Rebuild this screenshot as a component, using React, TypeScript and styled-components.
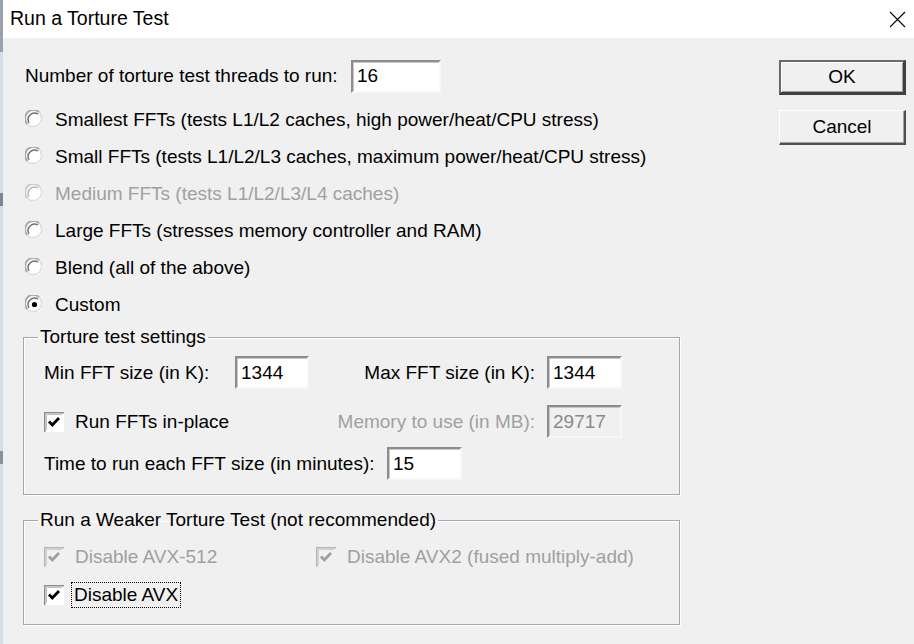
import * as React from 'react';
import styled, { createGlobalStyle } from 'styled-components';

const GlobalStyle = createGlobalStyle`
    html, body {
        margin: 0;
        padding: 0;
        background: #f0f0f0;
    }
    body {
        font-family: "Liberation Sans", Arial, sans-serif;
    }
`;

const Window = styled.div`
    display: flex;
    width: 914px;
    height: 644px;
    overflow: hidden;
    background: #f0f0f0;
    color: #000;
    font-size: 19px;
`;

const Edge = styled.div`
    width: 3px;
    background: linear-gradient(#9aa3ad 0 8%, #d5dde6 8% 30%, #7d8690 30% 32%, #d5dde6 32% 70%, #8a939c 70% 72%, #d5dde6 72%);
`;

const Dialog = styled.div`
    flex: 1;
    display: flex;
    flex-direction: column;
`;

const TitleBar = styled.div`
    height: 38px;
    background: #fff;
    display: flex;
    align-items: center;
    justify-content: space-between;
    padding: 0 8px 0 7px;
`;

const Title = styled.div`
    font-size: 19.5px;
    padding-bottom: 2px;
`;

const Body = styled.div`
    display: flex;
    padding: 22px 0 0 20px;
`;

const Main = styled.div`
    width: 657px;
    display: flex;
    flex-direction: column;
`;

const Side = styled.div`
    margin-left: 99px;
    display: flex;
    flex-direction: column;
    gap: 15px;
`;

const Row = styled.div<{ $h?: number; $pad?: number; $top?: number }>`
    display: flex;
    align-items: center;
    height: ${p => p.$h ?? 33}px;
    padding-left: ${p => p.$pad ?? 0}px;
    margin-top: ${p => p.$top ?? 0}px;
`;

const Label = styled.span<{ $w?: number; $off?: boolean; $right?: boolean }>`
    white-space: nowrap;
    color: ${p => (p.$off ? '#a0a0a0' : '#000')};
    ${p => (p.$w ? `width: ${p.$w}px; flex: none;` : '')}
    ${p => (p.$right ? 'text-align: right; padding-right: 12px; box-sizing: border-box;' : '')}
`;

const Field = styled.div<{ $w: number; $off?: boolean }>`
    box-sizing: border-box;
    width: ${p => p.$w}px;
    height: 33px;
    flex: none;
    display: flex;
    align-items: center;
    padding-left: 4px;
    background: ${p => (p.$off ? '#f0f0f0' : '#fff')};
    color: ${p => (p.$off ? '#8a8a8a' : '#000')};
    border-style: solid;
    border-width: 2px;
    border-color: #8c8c8c #f7f7f7 #f7f7f7 #8c8c8c;
    box-shadow: inset 1px 1px 0 #c8c8c8;
`;

const RadioList = styled.div`
    margin-top: 9px;
    display: flex;
    flex-direction: column;
`;

const Option = styled.div<{ $off?: boolean }>`
    display: flex;
    align-items: center;
    gap: 11px;
    height: 37px;
    padding-left: 2px;
    white-space: nowrap;
    color: ${p => (p.$off ? '#a0a0a0' : '#000')};
`;

const Group = styled.fieldset<{ $top: number; $pt: number; $pb: number }>`
    margin: ${p => p.$top}px 0 0 0;
    padding: ${p => p.$pt}px 57px ${p => p.$pb}px 20px;
    border: 1px solid #a8a8a8;
    box-shadow: inset 1px 1px 0 #fff, 1px 1px 0 #fff;
    min-width: 0;
`;

const Legend = styled.legend`
    margin-left: -6px;
    padding: 0 2px;
    line-height: 22px;
`;

const SizeGrid = styled.div`
    display: grid;
    grid-template-columns: 191px 74px 1fr 75px;
    grid-template-rows: 33px 33px;
    row-gap: 16px;
    align-items: center;
`;

const Span2 = styled.div`
    grid-column: span 2;
    display: flex;
    align-items: center;
    gap: 11px;
`;

const CheckRow = styled.div<{ $gap?: number }>`
    display: flex;
    align-items: center;
    height: 30px;
    margin-top: ${p => p.$gap ?? 0}px;
`;

const CheckItem = styled.div<{ $w?: number; $off?: boolean }>`
    display: flex;
    align-items: center;
    gap: 11px;
    flex: none;
    white-space: nowrap;
    ${p => (p.$w ? `width: ${p.$w}px;` : '')}
    color: ${p => (p.$off ? '#a0a0a0' : '#000')};
`;

const Focus = styled.span`
    outline: 1px dotted #000;
    outline-offset: 1px;
    padding: 0 1px;
    margin-left: -2px;
`;

const Button = styled.button<{ $default?: boolean }>`
    width: 127px;
    height: 35px;
    font: inherit;
    font-size: 19px;
    color: #000;
    background: #f0f0f0;
    padding: 0;
    border-style: solid;
    border-width: ${p => (p.$default ? '2px 3px 3px 2px' : '1px 2px 2px 1px')};
    border-color: ${p => (p.$default ? '#6a6a6a #404040 #404040 #6a6a6a' : '#fff #505050 #505050 #fff')};
    box-shadow: ${p => (p.$default ? 'inset 1px 1px 0 #fff, inset -1px -1px 0 #a0a0a0' : 'inset -1px -1px 0 #a0a0a0')};
    cursor: pointer;
`;

const Radio = ({ on, off }: { on?: boolean; off?: boolean }) => (
    <svg width="19" height="19" viewBox="0 0 19 19">
        <circle cx="9.5" cy="9.5" r="8" fill="#fff" />
        <path d="M2.4 14.2 A8.3 8.3 0 0 1 14.2 2.4" fill="none" stroke={off ? '#c8c8c8' : '#a8a8a8'} strokeWidth="1.8" />
        <path d="M4.1 12.9 A6.4 6.4 0 0 1 12.9 4.1" fill="none" stroke={off ? '#b8b8b8' : '#707070'} strokeWidth="1.4" />
        <path d="M14.2 2.4 A8.3 8.3 0 0 1 2.4 14.2" fill="none" stroke="#dedede" strokeWidth="1.6" />
        {on && <circle cx="9.5" cy="9.5" r="2.6" fill="#000" />}
    </svg>
);

const Check = ({ off }: { off?: boolean }) => (
    <svg width="20" height="20" viewBox="0 0 20 20">
        <rect x="0" y="0" width="20" height="20" fill={off ? '#f0f0f0' : '#fff'} />
        <path d="M0.5 20 V0.5 H20" fill="none" stroke={off ? '#b4b4b4' : '#8c8c8c'} strokeWidth="2" />
        <path d="M2.5 18 V2.5 H18" fill="none" stroke={off ? '#d0d0d0' : '#c0c0c0'} strokeWidth="1" />
        <path d="M5 9.5 L8.3 13 L15 6" fill="none" stroke={off ? '#a0a0a0' : '#000'} strokeWidth="2.8" />
    </svg>
);

const Close = () => (
    <svg width="17" height="17" viewBox="0 0 17 17">
        <path d="M1 1 L16 16 M16 1 L1 16" stroke="#000" strokeWidth="1.1" />
    </svg>
);

const options = [
    { text: 'Smallest FFTs (tests L1/L2 caches, high power/heat/CPU stress)' },
    { text: 'Small FFTs (tests L1/L2/L3 caches, maximum power/heat/CPU stress)' },
    { text: 'Medium FFTs (tests L1/L2/L3/L4 caches)', off: true },
    { text: 'Large FFTs (stresses memory controller and RAM)' },
    { text: 'Blend (all of the above)' },
    { text: 'Custom', on: true },
];

export default function App() {
    return (
        <Window>
            <GlobalStyle />
            <Edge />
            <Dialog>
                <TitleBar>
                    <Title>Run a Torture Test</Title>
                    <Close />
                </TitleBar>
                <Body>
                    <Main>
                        <Row $h={32} $pad={2}>
                            <Label $w={326}>Number of torture test threads to run:</Label>
                            <Field $w={90}>16</Field>
                        </Row>

                        <RadioList>
                            {options.map(o => (
                                <Option key={o.text} $off={o.off}>
                                    <Radio on={o.on} off={o.off} />
                                    <span>{o.text}</span>
                                </Option>
                            ))}
                        </RadioList>

                        <Group $top={3} $pt={8} $pb={14}>
                            <Legend>Torture test settings</Legend>
                            <SizeGrid>
                                <Label>Min FFT size (in K):</Label>
                                <Field $w={74}>1344</Field>
                                <Label $right>Max FFT size (in K):</Label>
                                <Field $w={75}>1344</Field>

                                <Span2>
                                    <Check />
                                    <span>Run FFTs in-place</span>
                                </Span2>
                                <Label $right $off>Memory to use (in MB):</Label>
                                <Field $w={75} $off>29717</Field>
                            </SizeGrid>
                            <Row $top={9}>
                                <Label $w={343}>Time to run each FFT size (in minutes):</Label>
                                <Field $w={75}>15</Field>
                            </Row>
                        </Group>

                        <Group $top={14} $pt={11} $pb={14}>
                            <Legend>Run a Weaker Torture Test (not recommended)</Legend>
                            <CheckRow>
                                <CheckItem $w={272} $off>
                                    <Check off />
                                    <span>Disable AVX-512</span>
                                </CheckItem>
                                <CheckItem $off>
                                    <Check off />
                                    <span>Disable AVX2 (fused multiply-add)</span>
                                </CheckItem>
                            </CheckRow>
                            <CheckRow $gap={8}>
                                <CheckItem>
                                    <Check />
                                    <Focus>Disable AVX</Focus>
                                </CheckItem>
                            </CheckRow>
                        </Group>
                    </Main>
                    <Side>
                        <Button $default>OK</Button>
                        <Button>Cancel</Button>
                    </Side>
                </Body>
            </Dialog>
        </Window>
    );
}
